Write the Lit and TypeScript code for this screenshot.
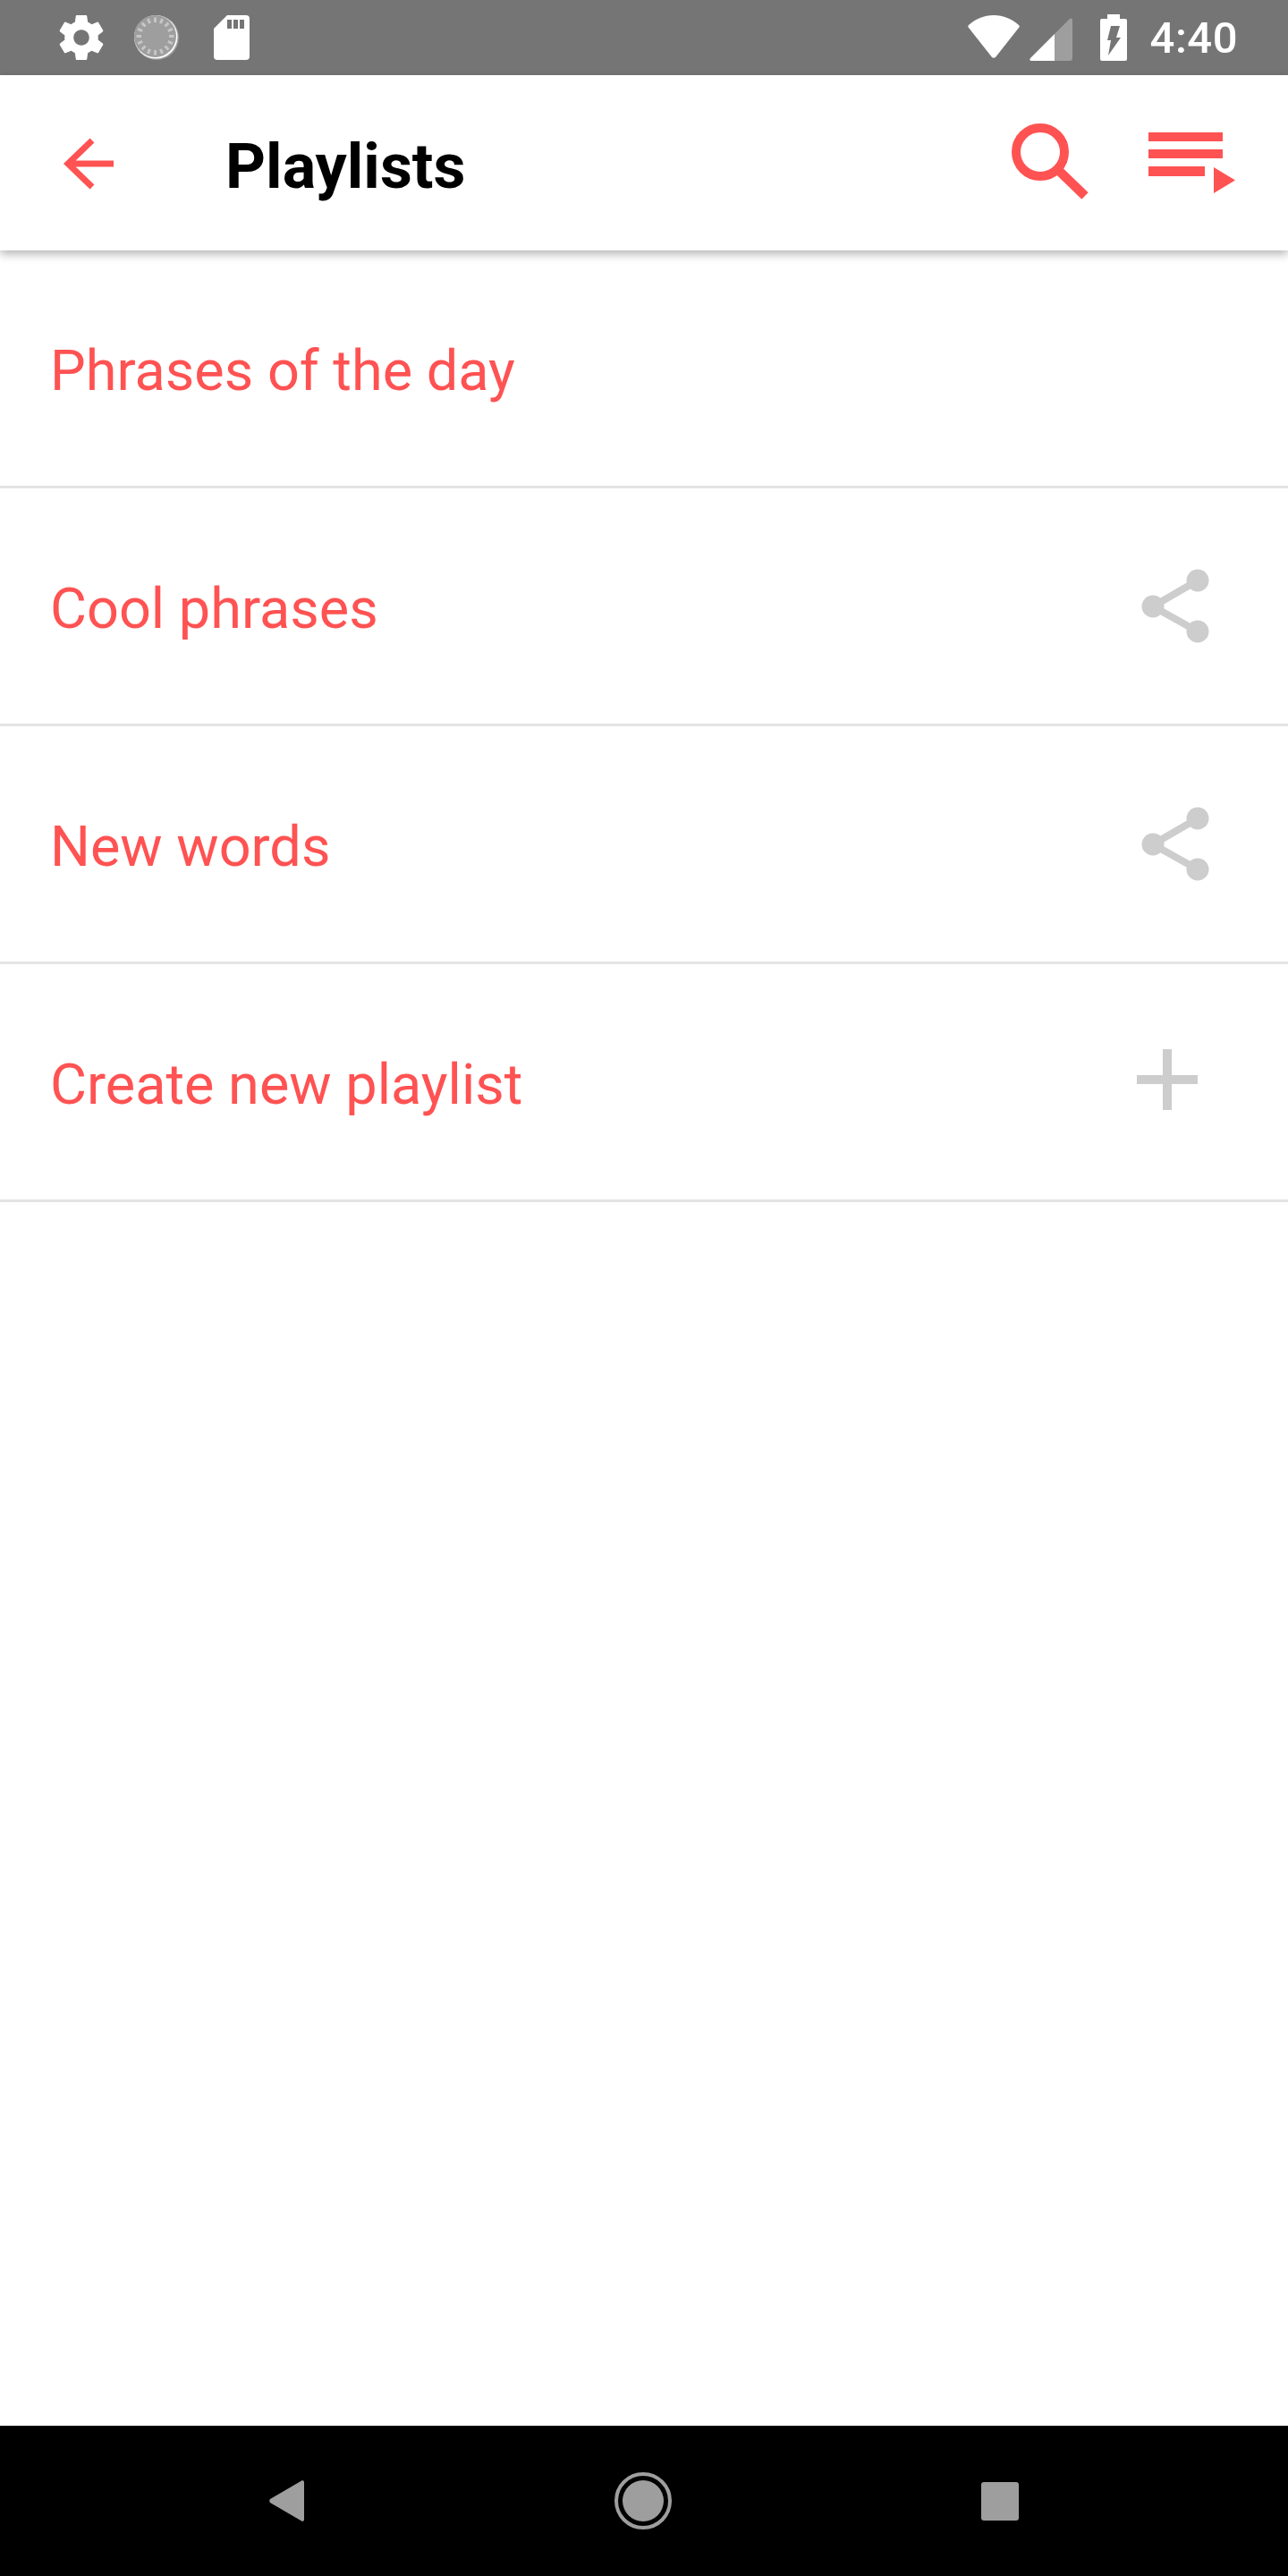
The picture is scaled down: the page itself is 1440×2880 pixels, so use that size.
import { LitElement, html, svg, css } from 'lit';
import { customElement } from 'lit/decorators.js';

type Playlist = { name: string; action: 'none' | 'share' | 'add' };

const playlists: Playlist[] = [
  { name: 'Phrases of the day', action: 'none' },
  { name: 'Cool phrases', action: 'share' },
  { name: 'New words', action: 'share' },
  { name: 'Create new playlist', action: 'add' },
];

// little dashes round the sync status icon
const syncTicks = Array.from({ length: 16 }, (_, i) => {
  const a = (i * Math.PI) / 8;
  return svg`<line
    x1=${23.5 + 15.5 * Math.cos(a)}
    y1=${23.5 + 15.5 * Math.sin(a)}
    x2=${23.5 + 21 * Math.cos(a)}
    y2=${23.5 + 21 * Math.sin(a)}
  />`;
});

@customElement('app-root')
export class AppRoot extends LitElement {
  static styles = css`
    :host {
      display: flex;
      flex-direction: column;
      width: 1440px;
      height: 2880px;
      background: #fff;
      font-family: Roboto, sans-serif;
      overflow: hidden;
    }

    .status {
      height: 84px;
      background: #757575;
      display: flex;
      align-items: center;
      padding: 0 56px 0 66px;
      box-sizing: border-box;
      flex: none;
    }
    .status svg {
      display: block;
    }
    .status-left {
      display: flex;
      align-items: center;
      gap: 34px;
    }
    .sd {
      margin-left: 5px;
    }
    .status-right {
      margin-left: auto;
      display: flex;
      align-items: center;
    }
    .wifi {
      margin-top: -2px;
    }
    .signal {
      margin-left: 10px;
      margin-top: 3px;
    }
    .battery {
      margin-left: 31px;
    }
    .clock {
      color: #fff;
      font-size: 49px;
      font-weight: 500;
      margin-left: 26px;
      letter-spacing: 0.5px;
    }

    .appbar {
      height: 196px;
      flex: none;
      display: flex;
      align-items: center;
      background: #fff;
      box-shadow: 0 4px 10px rgba(0, 0, 0, 0.3);
      position: relative;
      padding: 0 58px 0 70px;
      box-sizing: border-box;
    }
    .back {
      width: 60px;
      height: 60px;
      margin-top: 2px;
    }
    .title {
      font-size: 70px;
      font-weight: 700;
      color: #000;
      margin-left: 122px;
      margin-top: 8px;
    }
    .search {
      margin-left: auto;
      width: 88px;
      height: 88px;
    }
    .queue {
      width: 98px;
      height: 72px;
      margin-left: 65px;
      margin-top: 4px;
    }

    .list {
      flex: 1;
    }
    .row {
      height: 266px;
      box-sizing: border-box;
      border-bottom: 3px solid #e4e4e4;
      display: flex;
      align-items: center;
      justify-content: space-between;
      padding: 0 81px 0 56px;
    }
    .name {
      font-size: 63px;
      color: #ff5252;
      margin-top: 6px;
    }
    .share {
      width: 84px;
      height: 84px;
    }
    .add {
      width: 68px;
      height: 68px;
      margin-right: 20px;
      margin-top: -5px;
    }

    .nav {
      height: 168px;
      flex: none;
      background: #000;
      display: flex;
      align-items: center;
      gap: 346.5px;
      padding-left: 301px;
    }
    .nav svg {
      display: block;
    }
  `;

  private renderAction(action: Playlist['action']) {
    if (action === 'share') {
      return html`<svg class="share" viewBox="0 0 84 84">
        <path d="M14 42 L64 13 M14 42 L64 70" fill="none" stroke="#cdcdcd" stroke-width="8" />
        <circle cx="14" cy="42" r="12.5" fill="#cdcdcd" />
        <circle cx="64" cy="13" r="12.5" fill="#cdcdcd" />
        <circle cx="64" cy="70" r="12.5" fill="#cdcdcd" />
      </svg>`;
    }
    if (action === 'add') {
      return html`<svg class="add" viewBox="0 0 68 68">
        <path d="M29 0h10v29h29v10H39v29H29V39H0V29h29z" fill="#cdcdcd" />
      </svg>`;
    }
    return '';
  }

  render() {
    return html`
      <div class="status">
        <div class="status-left">
          <svg width="50" height="50" viewBox="2 2 20 20">
            <path fill="#fff" d="M19.43 12.98c.04-.32.07-.64.07-.98s-.03-.66-.07-.98l2.11-1.65c.19-.15.24-.42.12-.64l-2-3.46c-.12-.22-.39-.3-.61-.22l-2.49 1c-.52-.4-1.08-.73-1.69-.98l-.38-2.65C14.46 2.18 14.25 2 14 2h-4c-.25 0-.46.18-.49.42l-.38 2.65c-.61.25-1.17.59-1.69.98l-2.49-1c-.23-.09-.49 0-.61.22l-2 3.46c-.13.22-.07.49.12.64l2.11 1.65c-.04.32-.07.65-.07.98s.03.66.07.98l-2.11 1.65c-.19.15-.24.42-.12.64l2 3.46c.12.22.39.3.61.22l2.49-1c.52.4 1.08.73 1.69.98l.38 2.65c.03.24.24.42.49.42h4c.25 0 .46-.18.49-.42l.38-2.65c.61-.25 1.17-.59 1.69-.98l2.49 1c.23.09.49 0 .61-.22l2-3.46c.12-.22.07-.49-.12-.64l-2.11-1.65zM12 15.5c-1.93 0-3.5-1.57-3.5-3.5s1.57-3.5 3.5-3.5 3.5 1.57 3.5 3.5-1.57 3.5-3.5 3.5z" />
          </svg>
          <svg width="50" height="50" viewBox="0 0 50 50">
            <circle cx="25" cy="25" r="25" fill="#9e9e9e" />
            <circle cx="24.3" cy="24.3" r="24.2" fill="#fff" />
            <circle cx="23.5" cy="23.5" r="23.5" fill="#9e9e9e" />
            <g stroke="#c6c6c6" stroke-width="3">${syncTicks}</g>
          </svg>
          <svg class="sd" width="40" height="50" viewBox="0 0 40 50">
            <path fill="#fff" d="M15 0h21a4 4 0 0 1 4 4v42a4 4 0 0 1-4 4H4a4 4 0 0 1-4-4V15z" />
            <path fill="#757575" d="M15 5h5v10h-5zM22 5h5v10h-5zM29 5h5v10h-5z" />
          </svg>
        </div>
        <div class="status-right">
          <svg class="wifi" width="60" height="48" viewBox="0 0 60 48">
            <path fill="#fff" d="M2 11C10 4 19 0 30 0s20 4 28 11c1 1 1 2 0 3L32 47c-1 1-3 1-4 0L2 14c-1-1-1-2 0-3z" />
          </svg>
          <svg class="signal" width="48" height="48" viewBox="0 0 48 48">
            <path fill="#fff" d="M28 18L1 45c-1 1-1 3 1 3h26z" />
            <path fill="#9e9e9e" d="M28 18L45 1c1-1 3 0 3 1v43c0 2-1 3-3 3H28z" />
          </svg>
          <svg class="battery" width="30" height="52" viewBox="0 0 30 52">
            <path fill="#fff" d="M8 0h14v5h6a2 2 0 0 1 2 2v43a2 2 0 0 1-2 2H2a2 2 0 0 1-2-2V7a2 2 0 0 1 2-2h6z" />
            <path fill="#757575" d="M12 13h10l-4 13h5L9 46l3-17H8z" />
          </svg>
          <span class="clock">4:40</span>
        </div>
      </div>

      <div class="appbar">
        <svg class="back" viewBox="0 0 60 60">
          <path d="M57 30H6M33 4L6 30l27 26" fill="none" stroke="#ff5252" stroke-width="7" />
        </svg>
        <span class="title">Playlists</span>
        <svg class="search" viewBox="0 0 88 88">
          <circle cx="32" cy="32" r="27" fill="none" stroke="#ff5252" stroke-width="10" />
          <path d="M51 51l31 30" fill="none" stroke="#ff5252" stroke-width="10.5" />
        </svg>
        <svg class="queue" viewBox="0 0 98 72">
          <path fill="#ff5252" d="M0 0h83v10H0zM0 19h83v10H0zM0 38h63v11H0zM73 39l24 14.500-24 14.500z" />
        </svg>
      </div>

      <div class="list">
        ${playlists.map(
          (p) => html`<div class="row">
            <span class="name">${p.name}</span>
            ${this.renderAction(p.action)}
          </div>`
        )}
      </div>

      <div class="nav">
        <svg width="39" height="46" viewBox="0 0 39 46">
          <path fill="#9e9e9e" d="M37 0c1 0 2 1 2 2v42c0 1-1 2-2 2L1 25c-1-1-1-3 0-4z" />
        </svg>
        <svg width="64" height="64" viewBox="0 0 64 64">
          <circle cx="32" cy="32" r="30" fill="none" stroke="#9e9e9e" stroke-width="4" />
          <circle cx="32" cy="32" r="23" fill="#9e9e9e" />
        </svg>
        <svg width="42" height="43" viewBox="0 0 42 43">
          <rect width="42" height="43" rx="3" fill="#9e9e9e" />
        </svg>
      </div>
    `;
  }
}

declare global {
  interface HTMLElementTagNameMap {
    'app-root': AppRoot;
  }
}
